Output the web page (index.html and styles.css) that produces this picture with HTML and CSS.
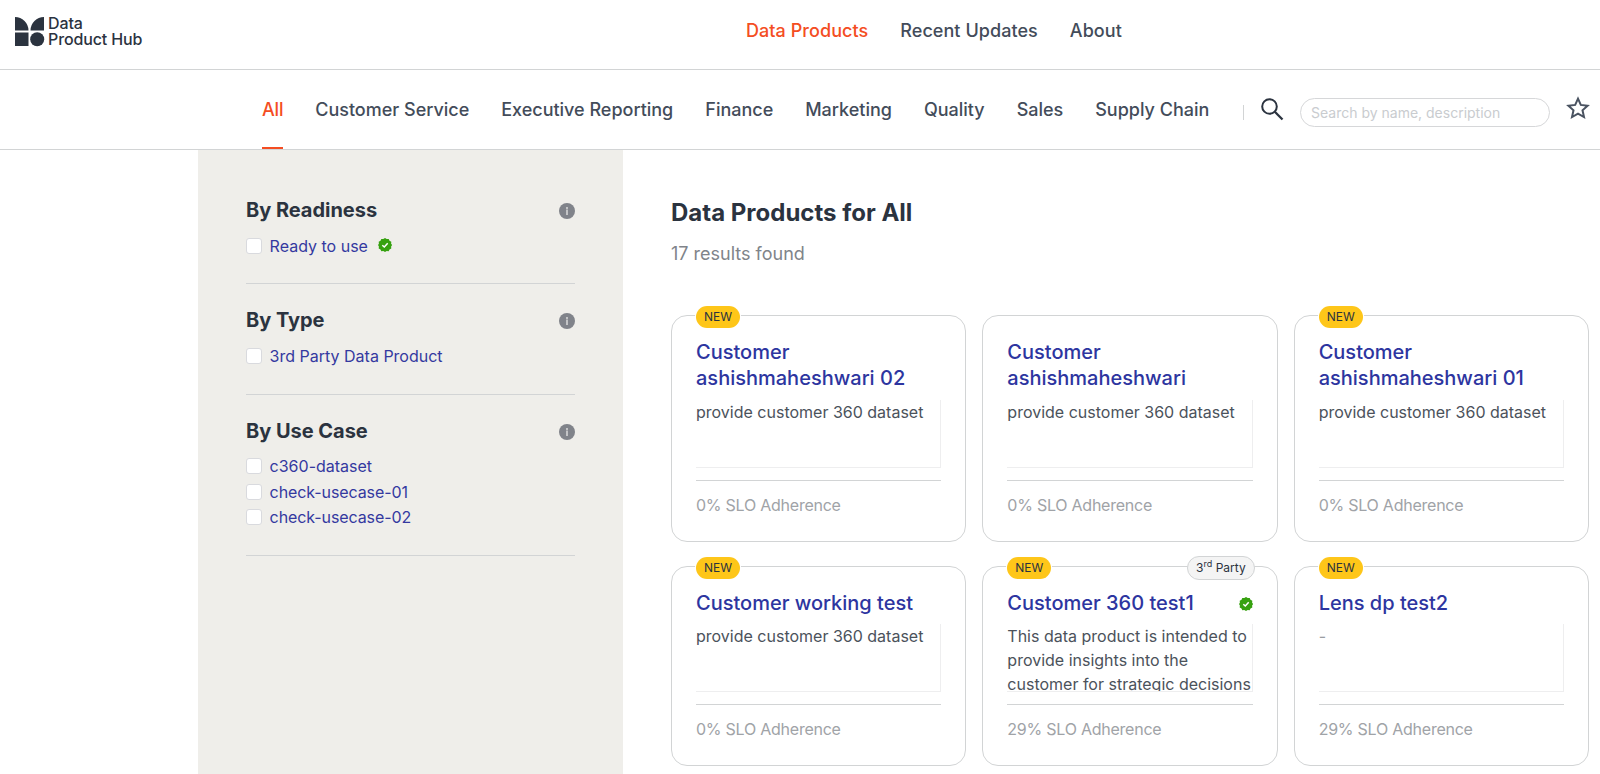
FILE: index.html
```html
<!DOCTYPE html>
<html lang="en">
<head>
<meta charset="utf-8">
<title>Data Product Hub</title>
<link rel="stylesheet" href="styles.css">
</head>
<body>
<svg class="defs" width="0" height="0">
  <symbol id="verified" viewBox="0 0 14 14">
    <path fill="#36a110" d="M7 0l1.7 1.1 2-.2.8 1.9 1.8.9-.2 2L14.100 7l-1 1.500.2 2-1.800.9-.8 1.900-2-.2L7 14l-1.700-.9-2 .2-.8-1.900-1.800-.9.2-2L0 7l.9-1.300-.2-2 1.800-.9.8-1.900 2 .2z"/>
    <path fill="none" stroke="#fff" stroke-width="1.500" d="M4.300 7.200l2 1.800 3.400-3.700"/>
  </symbol>
  <symbol id="info" viewBox="0 0 16 16">
    <circle cx="8" cy="8" r="8" fill="#80838a"/>
    <path fill="#c3c4c6" d="M7 4h2v2H7zM7 6.600h2V12H7z"/>
  </symbol>
</svg>

<header class="topbar">
  <a class="logo">
    <svg class="logo-mark" width="30" height="30" viewBox="0 0 30 30" fill="#2b333f">
      <path d="M0 0a13.500 13.500 0 0 1 13.500 13.500H0zM29 0v13.500H15.500A13.500 13.500 0 0 1 29 0zM0 15.500h13.500V29H0z"/>
      <circle cx="22.200" cy="22.200" r="7"/>
    </svg>
    <span class="logo-text">Data<br>Product Hub</span>
  </a>
  <nav class="main-nav">
    <a class="active">Data Products</a>
    <a>Recent Updates</a>
    <a>About</a>
  </nav>
</header>

<div class="subbar">
  <nav class="tabs">
    <a class="active">All</a>
    <a>Customer Service</a>
    <a>Executive Reporting</a>
    <a>Finance</a>
    <a>Marketing</a>
    <a>Quality</a>
    <a>Sales</a>
    <a>Supply Chain</a>
  </nav>
  <div class="tools">
    <span class="divider"></span>
    <svg class="search-icon" width="23" height="23" viewBox="0 0 23 23" fill="none" stroke="#2b333f" stroke-width="2">
      <circle cx="8.500" cy="8.500" r="7.300"/>
      <path d="M13.800 13.800L21.500 21.500" stroke-width="2.300"/>
    </svg>
    <input class="search" type="text" placeholder="Search by name, description">
    <svg class="star-icon" width="24" height="24" viewBox="0 0 24 24" fill="none" stroke="#4a5361" stroke-width="2">
      <path d="M12 2.700l2.800 6.200 6.800.8-5.100 4.600 1.500 6.800L12 17.700l-6 3.400 1.500-6.800L2.400 9.700l6.800-.8z"/>
    </svg>
  </div>
</div>

<div class="layout">
  <aside class="sidebar">
    <section class="filter">
      <div class="filter-head"><h3>By Readiness</h3><svg width="16" height="16"><use href="#info"/></svg></div>
      <label class="option"><span class="box"></span>Ready to use<svg class="ready" width="14" height="14"><use href="#verified"/></svg></label>
    </section>
    <section class="filter">
      <div class="filter-head"><h3>By Type</h3><svg width="16" height="16"><use href="#info"/></svg></div>
      <label class="option"><span class="box"></span>3rd Party Data Product</label>
    </section>
    <section class="filter">
      <div class="filter-head"><h3>By Use Case</h3><svg width="16" height="16"><use href="#info"/></svg></div>
      <label class="option"><span class="box"></span>c360-dataset</label>
      <label class="option tight"><span class="box"></span>check-usecase-01</label>
      <label class="option tight"><span class="box"></span>check-usecase-02</label>
    </section>
  </aside>

  <main class="content">
    <h1>Data Products for All</h1>
    <p class="count">17 results found</p>
    <div class="cards">
      <article class="card">
        <span class="badge new">NEW</span>
        <div class="card-head"><h2>Customer ashishmaheshwari 02</h2></div>
        <div class="desc">provide customer 360 dataset</div>
        <div class="slo">0% SLO Adherence</div>
      </article>
      <article class="card">
        <div class="card-head"><h2>Customer ashishmaheshwari</h2></div>
        <div class="desc">provide customer 360 dataset</div>
        <div class="slo">0% SLO Adherence</div>
      </article>
      <article class="card">
        <span class="badge new">NEW</span>
        <div class="card-head"><h2>Customer ashishmaheshwari 01</h2></div>
        <div class="desc">provide customer 360 dataset</div>
        <div class="slo">0% SLO Adherence</div>
      </article>
      <article class="card">
        <span class="badge new">NEW</span>
        <div class="card-head"><h2>Customer working test</h2></div>
        <div class="desc">provide customer 360 dataset</div>
        <div class="slo">0% SLO Adherence</div>
      </article>
      <article class="card">
        <span class="badge new">NEW</span>
        <span class="badge party">3<sup>rd</sup> Party</span>
        <div class="card-head"><h2>Customer 360 test1</h2><svg width="14" height="14"><use href="#verified"/></svg></div>
        <div class="desc">This data product is intended to provide insights into the customer for strategic decisions</div>
        <div class="slo">29% SLO Adherence</div>
      </article>
      <article class="card">
        <span class="badge new">NEW</span>
        <div class="card-head"><h2>Lens dp test2</h2></div>
        <div class="desc empty">-</div>
        <div class="slo">29% SLO Adherence</div>
      </article>
    </div>
  </main>
</div>
</body>
</html>
```

FILE: styles.css
```css
* { box-sizing: border-box; }
html, body { height: 100%; }
body {
  margin: 0;
  display: flex;
  flex-direction: column;
  overflow: hidden;
  background: #fff;
  color: #2b333f;
  font-family: Inter, "Liberation Sans", sans-serif;
  font-size: 16px;
}
h1, h2, h3, p { margin: 0; }
svg { display: block; flex: none; }
.defs { position: absolute; }

.topbar {
  display: flex;
  flex: none;
  height: 70px;
  border-bottom: 1px solid #d2d4d5;
}
.logo {
  display: flex;
  width: 746px;
  gap: 3px;
  padding: 17px 0 0 15px;
}
.logo-text {
  margin-top: -2px;
  font-size: 16px;
  font-weight: 500;
  letter-spacing: -0.120px;
  line-height: 16px;
}
.main-nav { display: flex; gap: 32px; padding-top: 18px; }
.main-nav a, .tabs a {
  font-size: 18px;
  font-weight: 500;
  line-height: 26px;
  color: #434c5a;
  white-space: nowrap;
}
.main-nav a { letter-spacing: 0.060px; }
.main-nav a.active { color: #f44d22; }

.subbar {
  display: flex;
  flex: none;
  justify-content: space-between;
  height: 80px;
  padding: 0 10px 0 262px;
  border-bottom: 1px solid #d2d4d5;
}
.tabs { display: flex; gap: 32px; letter-spacing: -0.010px; }
.tabs a { padding-top: 27px; }
.tabs a.active { color: #f44d22; border-bottom: 2px solid #f44d22; letter-spacing: -0.200px; }
.tools { display: flex; align-items: flex-start; }
.divider { width: 1px; height: 15px; margin: 35px 17px 0 0; background: #d2d4d5; }
.search-icon { margin: 28px 16px 0 0; }
.search {
  width: 250px;
  height: 29px;
  margin: 28px 16px 0 0;
  padding: 0 10px;
  border: 1px solid #d6d7d9;
  border-radius: 15px;
  font: 14px Inter, sans-serif;
}
.search::placeholder { color: #c9cccf; }
.star-icon { margin-top: 26px; }

.layout { display: flex; flex: 1; min-height: 0; padding-left: 198px; }
.sidebar { flex: none; width: 425px; padding: 24px 48px 0; background: #efeeea; }
.filter { padding: 23.800px 0 25.150px; border-bottom: 1px solid #d2d4d5; }
.filter-head { display: flex; align-items: center; justify-content: space-between; margin-bottom: 9.150px; }
.filter h3 { margin: -1px 0 1px; font-size: 20px; font-weight: 700; letter-spacing: -0.030px; line-height: 26px; }
.option { display: flex; align-items: center; height: 25.300px; color: #3439a0; }
.tight { letter-spacing: -0.090px; }
.box {
  width: 16px;
  height: 16px;
  margin-right: 7.600px;
  background: #fff;
  border: 1px solid #d9dade;
  border-radius: 3px;
}
.ready { margin: -2px 0 0 10px; }

.content { flex: 1; padding: 48px 11px 0 48px; }
.content h1 { font-size: 24px; font-weight: 700; line-height: 30px; }
.count { margin-top: 12px; font-size: 18px; line-height: 28px; color: #80848a; }
.cards {
  display: grid;
  grid-template-columns: repeat(3, minmax(0, 1fr));
  gap: 24px 16px;
  margin-top: 47.400px;
}
.card {
  position: relative;
  padding: 24px;
  border: 1px solid #d2d4d5;
  border-radius: 16px;
}
.badge { position: absolute; display: flex; font-size: 12px; white-space: nowrap; }
.new {
  top: -10px;
  left: 24px;
  padding: 0 8px;
  border-radius: 11px;
  background: #fec619;
  box-shadow: 0 0 0 1px #fff;
  font-weight: 400;
  line-height: 22px;
}
.party {
  top: -11px;
  right: 22px;
  padding: 0 8px;
  border: 1px solid #d2d4d5;
  border-radius: 12px;
  background: #f4f4f4;
  font-weight: 400;
  line-height: 22px;
  white-space: pre;
}
.party sup { font-size: 9px; line-height: 14px; }
.card-head { display: flex; justify-content: space-between; margin: -1px 0 8.400px; }
.card-head h2 { font-size: 20px; font-weight: 500; line-height: 26px; color: #2d35a0; }
.card-head svg { margin-top: 7px; }
.desc {
  height: 68px;
  border-right: 1px solid #eeeeef;
  border-bottom: 1px solid #eeeeef;
  overflow: hidden;
  line-height: 24px;
  color: #4b525b;
}
.desc.empty { color: #9a9da2; }
.slo {
  margin-top: 12px;
  padding-top: 12px;
  border-top: 1px solid #d2d4d5;
  letter-spacing: -0.240px;
  line-height: 24px;
  color: #a0a3a7;
}
```
